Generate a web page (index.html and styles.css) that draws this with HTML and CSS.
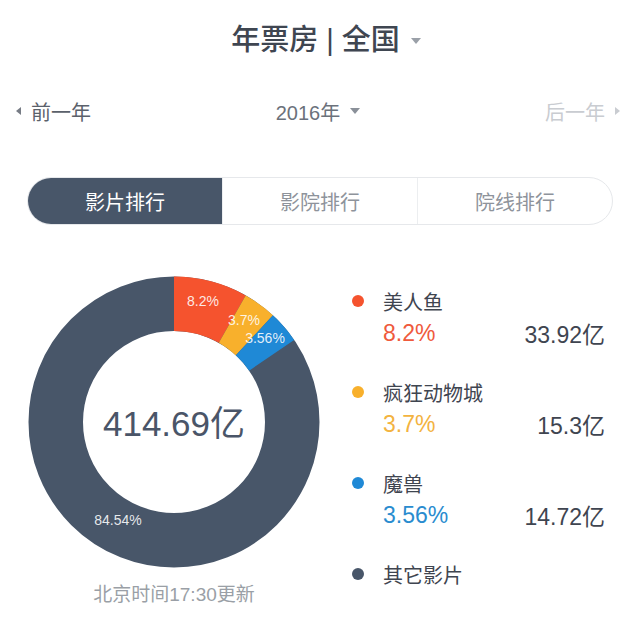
FILE: index.html
```html
<!DOCTYPE html>
<html lang="zh">
<head>
<meta charset="utf-8">
<title>年票房</title>
<link rel="stylesheet" href="styles.css">
</head>
<body>
<div class="page">
  <header class="header">
    <span class="title">年票房 | 全国</span>
    <span class="caret caret-title"></span>
  </header>

  <div class="year-row">
    <div class="year-prev"><span class="arrow-left"></span><span>前一年</span></div>
    <div class="year-current"><span>2016年</span><span class="caret caret-year"></span></div>
    <div class="year-next"><span>后一年</span><span class="arrow-right"></span></div>
  </div>

  <div class="tabs">
    <div class="tab active">影片排行</div>
    <div class="tab">影院排行</div>
    <div class="tab">院线排行</div>
  </div>

  <div class="main">
    <div class="chart">
      <svg class="donut" width="300" height="300" viewBox="0 0 300 300">
        <circle cx="150" cy="150" r="118.25" fill="none" stroke="#485669" stroke-width="54.5"/>
        <g transform="rotate(-90 150 150)">
          <circle cx="150" cy="150" r="118.25" fill="none" stroke="#f5532e" stroke-width="54.5" pathLength="100" stroke-dasharray="8.2 91.8" stroke-dashoffset="0"/>
          <circle cx="150" cy="150" r="118.25" fill="none" stroke="#f8b02c" stroke-width="54.5" pathLength="100" stroke-dasharray="3.7 96.3" stroke-dashoffset="-8.2"/>
          <circle cx="150" cy="150" r="118.25" fill="none" stroke="#1f89d6" stroke-width="54.5" pathLength="100" stroke-dasharray="3.56 96.44" stroke-dashoffset="-11.9"/>
        </g>
        <text class="seg-label" x="179" y="29">8.2%</text>
        <text class="seg-label" x="220" y="48">3.7%</text>
        <text class="seg-label" x="241" y="66">3.56%</text>
        <text class="seg-label" x="94" y="248">84.54%</text>
        <text class="total" x="150" y="151">414.69亿</text>
      </svg>
      <div class="caption">北京时间17:30更新</div>
    </div>

    <div class="legend">
      <div class="item">
        <div class="name"><span class="dot red"></span>美人鱼</div>
        <div class="stats"><span class="pct red-text">8.2%</span><span class="val">33.92亿</span></div>
      </div>
      <div class="item">
        <div class="name"><span class="dot orange"></span>疯狂动物城</div>
        <div class="stats"><span class="pct orange-text">3.7%</span><span class="val">15.3亿</span></div>
      </div>
      <div class="item">
        <div class="name"><span class="dot blue"></span>魔兽</div>
        <div class="stats"><span class="pct blue-text">3.56%</span><span class="val">14.72亿</span></div>
      </div>
      <div class="item">
        <div class="name"><span class="dot dark"></span>其它影片</div>
      </div>
    </div>
  </div>
</div>
</body>
</html>
```

FILE: styles.css
```css
html, body {
  margin: 0;
  padding: 0;
  background: #ffffff;
}

body {
  font-family: "Liberation Sans", "Noto Sans CJK SC", sans-serif;
  color: #444a55;
}

.page {
  width: 640px;
  height: 631px;
  overflow: hidden;
}

.header {
  height: 80px;
  display: flex;
  align-items: center;
  justify-content: center;
  gap: 11px;
  padding-left: 12px;
  box-sizing: border-box;
}

.title {
  font-size: 29px;
  font-weight: 500;
  color: #3f4651;
  line-height: 1;
}

.caret {
  display: inline-block;
  width: 0;
  height: 0;
  border-left: 5px solid transparent;
  border-right: 5px solid transparent;
  border-top: 6px solid #9aa0a8;
}

.caret-title {
  margin-top: 2px;
}

.year-row {
  height: 62px;
  display: flex;
  align-items: center;
  justify-content: space-between;
  padding: 0 20px 0 16px;
  font-size: 20px;
}

.year-prev {
  display: flex;
  align-items: center;
  gap: 10px;
  color: #5b616b;
  width: 120px;
}

.year-current {
  display: flex;
  align-items: center;
  gap: 10px;
  color: #6b717b;
}

.caret-year {
  border-top-color: #8a9099;
}

.year-next {
  display: flex;
  align-items: center;
  justify-content: flex-end;
  gap: 10px;
  color: #c9ccd1;
  width: 120px;
}

.arrow-left {
  width: 0;
  height: 0;
  border-top: 4px solid transparent;
  border-bottom: 4px solid transparent;
  border-right: 5px solid #777c85;
}

.arrow-right {
  width: 0;
  height: 0;
  border-top: 4px solid transparent;
  border-bottom: 4px solid transparent;
  border-left: 5px solid #c9ccd1;
}

.tabs {
  margin: 35px 27px 0;
  height: 48px;
  border: 1px solid #e6e8eb;
  border-radius: 25px;
  display: flex;
  overflow: hidden;
  box-sizing: border-box;
}

.tab {
  flex: 1;
  display: flex;
  align-items: center;
  justify-content: center;
  font-size: 20px;
  color: #8e939b;
}

.tab + .tab {
  border-left: 1px solid #eceef0;
}

.tab.active {
  background: #485669;
  color: #ffffff;
}

.main {
  display: flex;
  margin-top: 47px;
}

.chart {
  margin-left: 24px;
  width: 300px;
  display: flex;
  flex-direction: column;
  align-items: center;
}

.donut {
  display: block;
}

.seg-label {
  font-family: "Liberation Sans", sans-serif;
  font-size: 14px;
  fill: rgba(255, 255, 255, 0.88);
  text-anchor: middle;
  dominant-baseline: central;
}

.total {
  font-family: "Liberation Sans", "Noto Sans CJK SC", sans-serif;
  font-size: 35px;
  fill: #4a5568;
  text-anchor: middle;
  dominant-baseline: central;
}

.caption {
  margin-top: 12px;
  font-size: 19px;
  line-height: 22px;
  color: #9a9fa6;
}

.legend {
  margin-left: 28px;
  padding-top: 14px;
  width: 253px;
  display: flex;
  flex-direction: column;
  gap: 27px;
}

.item {
  display: flex;
  flex-direction: column;
}

.name {
  display: flex;
  align-items: center;
  height: 30px;
  font-size: 20px;
  color: #3f4550;
}

.dot {
  width: 12px;
  height: 12px;
  border-radius: 50%;
  margin-right: 19px;
  flex: none;
}

.dot.red { background: #f5532e; }
.dot.orange { background: #f8b02c; }
.dot.blue { background: #1f89d6; }
.dot.dark { background: #485669; }

.stats {
  display: flex;
  justify-content: space-between;
  align-items: center;
  height: 34px;
  padding-left: 31px;
  font-size: 23px;
}

.pct.red-text { color: #ef5a3c; }
.pct.orange-text { color: #f3b33f; }
.pct.blue-text { color: #2a8ccf; }

.val {
  color: #3f4550;
}
```
